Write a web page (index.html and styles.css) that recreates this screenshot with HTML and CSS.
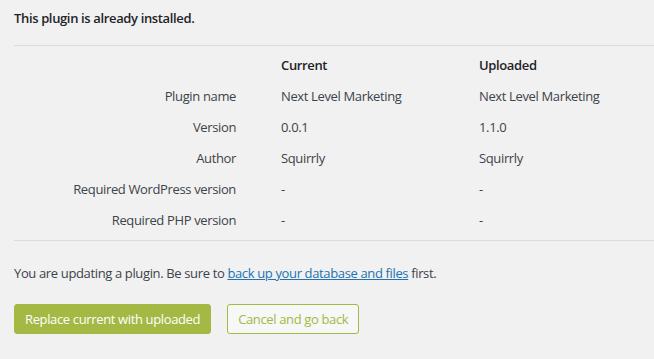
FILE: index.html
```html
<!DOCTYPE html>
<html lang="en">
<head>
  <meta charset="UTF-8">
  <title>Upload Plugin</title>
  <link rel="stylesheet" href="styles.css">
</head>
<body>
  <div class="wrap">

    <!-- already installed notice -->
    <h2 class="notice-title">This plugin is already installed.</h2>

    <div class="compare">
      <div class="row head">
        <div class="label"></div>
        <div class="cell">Current</div>
        <div class="cell">Uploaded</div>
      </div>
      <div class="row">
        <div class="label">Plugin name</div>
        <div class="cell">Next Level Marketing</div>
        <div class="cell">Next Level Marketing</div>
      </div>
      <div class="row">
        <div class="label">Version</div>
        <div class="cell">0.0.1</div>
        <div class="cell">1.1.0</div>
      </div>
      <div class="row">
        <div class="label">Author</div>
        <div class="cell">Squirrly</div>
        <div class="cell">Squirrly</div>
      </div>
      <div class="row">
        <div class="label">Required WordPress version</div>
        <div class="cell">-</div>
        <div class="cell">-</div>
      </div>
      <div class="row">
        <div class="label">Required PHP version</div>
        <div class="cell">-</div>
        <div class="cell">-</div>
      </div>
    </div>

    <p class="update-note">You are updating a plugin. Be sure to <a href="#">back up your database and files</a> first.</p>

    <div class="actions">
      <a href="#" class="button button-primary">Replace current with uploaded</a>
      <a href="#" class="button">Cancel and go back</a>
    </div>

  </div>
</body>
</html>
```

FILE: styles.css
```css
* {
  box-sizing: border-box;
}

html, body {
  margin: 0;
  padding: 0;
  background: #f1f1f1;
  font-family: "Open Sans", "Noto Sans", sans-serif;
  font-size: 13px;
  letter-spacing: -0.36px;
  color: #3c434a;
}

.wrap {
  padding: 0 0 0 14px;
}

.notice-title {
  margin: 0;
  padding: 9px 0 0;
  height: 45px;
  font-size: 13px;
  font-weight: 600;
  color: #1d2327;
  line-height: 18px;
}

.compare {
  border-top: 1px solid #dcdcde;
  border-bottom: 1px solid #dcdcde;
  padding: 3px 0 5px;
}

.row {
  display: grid;
  grid-template-columns: 267px 198px 1fr;
  height: 31px;
  align-items: center;
}

.row .label {
  text-align: right;
  padding-right: 45px;
}

.row.head .cell {
  font-weight: 600;
  color: #1d2327;
}

.update-note {
  margin: 23px 0 0;
  line-height: 18px;
}

.update-note a {
  color: #2271b1;
  text-decoration: underline;
}

.actions {
  display: flex;
  gap: 16px;
  margin-top: 22px;
}

.button {
  display: inline-block;
  height: 30px;
  line-height: 28px;
  padding: 0 10px;
  border: 1px solid #a4b844;
  border-radius: 3px;
  background: #f6f7f7;
  color: #a4b844;
  text-decoration: none;
  font-size: 13px;
}

.button-primary {
  background: #a4b844;
  color: #fff;
}
```
